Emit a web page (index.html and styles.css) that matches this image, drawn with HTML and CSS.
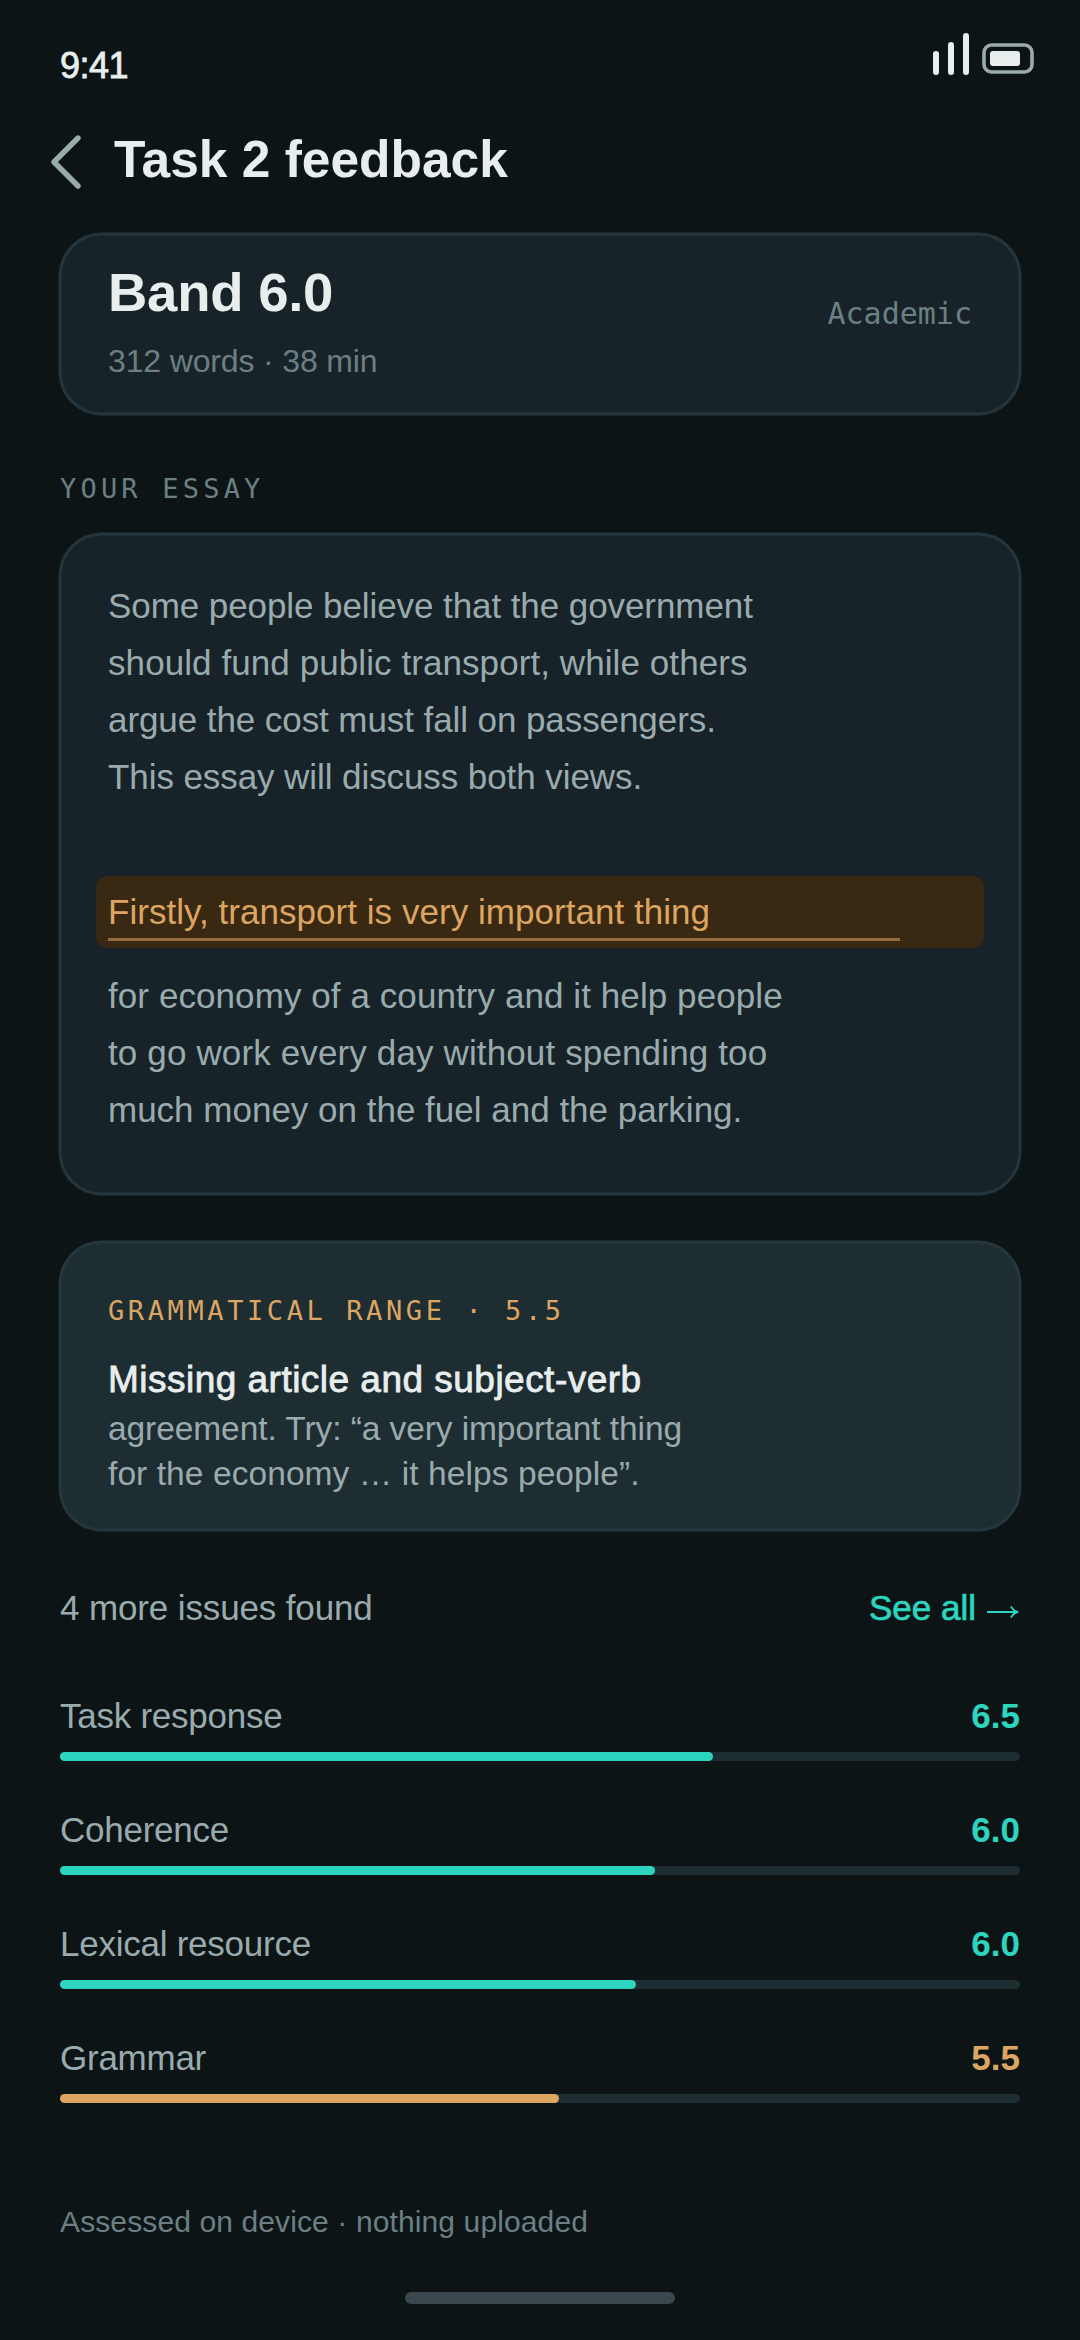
FILE: index.html
```html
<!DOCTYPE html>
<html lang="en">
<head>
  <meta charset="utf-8">
  <title>Task 2 feedback</title>
  <link rel="stylesheet" href="styles.css">
</head>
<body>
  <div class="status">
    <span class="time">9:41</span>
    <svg class="status-icons" viewBox="932 32 103 44" width="103" height="44" aria-hidden="true">
      <rect class="signal" x="933" y="51" width="6" height="24" rx="3"/>
      <rect class="signal" x="948" y="42" width="6" height="33" rx="3"/>
      <rect class="signal" x="963" y="33" width="6" height="42" rx="3"/>
      <rect class="battery" x="984" y="45" width="48" height="27" rx="7.5"/>
      <rect class="signal" x="990" y="51" width="30" height="15" rx="3"/>
    </svg>
  </div>

  <header class="header">
    <svg class="back" viewBox="0 0 30 60" width="30" height="60" aria-label="Back">
      <path d="M27 9 3 33l24 24"/>
    </svg>
    <h1 class="title">Task 2 feedback</h1>
  </header>

  <main class="content">
    <section class="card summary">
      <div>
        <div class="band">Band 6.0</div>
        <div class="meta">312 words · 38 min</div>
      </div>
      <span class="module">Academic</span>
    </section>

    <h2 class="section-label">YOUR ESSAY</h2>

    <section class="card essay">
      <p class="line tight">Some people believe that the government</p>
      <p class="line wide">should fund public transport, while others</p>
      <p class="line tight">argue the cost must fall on passengers.</p>
      <p class="line tight">This essay will discuss both views.</p>
      <p class="highlight">Firstly, transport is very important thing</p>
      <p class="line wide">for economy of a country and it help people</p>
      <p class="line wider">to go work every day without spending too</p>
      <p class="line">much money on the fuel and the parking.</p>
    </section>

    <section class="card issue">
      <div class="criterion">GRAMMATICAL RANGE · 5.5</div>
      <h3 class="issue-title">Missing article and subject-verb</h3>
      <p class="issue-text tight">agreement. Try: “a very important thing</p>
      <p class="issue-text wide">for the economy … it helps people”.</p>
    </section>

    <div class="more">
      <span class="more-count">4 more issues found</span>
      <a class="see-all">See all
        <svg viewBox="0 0 34 16" width="34" height="16" aria-hidden="true"><path d="M1 8h31M25 2.3c1.5 3 4 5 7.2 5.7-3.2.7-5.7 2.7-7.2 5.7"/></svg>
      </a>
    </div>

    <div class="scores">
      <div class="score">
        <div class="score-row"><span class="name">Task response</span><b class="value">6.5</b></div>
        <div class="track"><div class="fill" style="width:68%"></div></div>
      </div>
      <div class="score">
        <div class="score-row"><span class="name">Coherence</span><b class="value">6.0</b></div>
        <div class="track"><div class="fill" style="width:62%"></div></div>
      </div>
      <div class="score">
        <div class="score-row"><span class="name">Lexical resource</span><b class="value">6.0</b></div>
        <div class="track"><div class="fill" style="width:60%"></div></div>
      </div>
      <div class="score weak">
        <div class="score-row"><span class="name">Grammar</span><b class="value">5.5</b></div>
        <div class="track"><div class="fill" style="width:52%"></div></div>
      </div>
    </div>

    <p class="footnote">Assessed on device · nothing uploaded</p>
  </main>

  <div class="home-bar"></div>
</body>
</html>
```
FILE: styles.css
```css
:root {
  --bg: #0c1416;
  --card: #172328;
  --raised: #1e2d32;
  --line: #26383e;
  --text: #e8eeee;
  --muted: #9aabae;
  --faint: #6c7f83;
  --teal: #2dd4bf;
  --amber: #dda562;
  --amber-bg: #3a2912;
}

* { box-sizing: border-box; margin: 0; padding: 0; }

body {
  width: 1080px;
  height: 2340px;
  overflow: hidden;
  background: var(--bg);
  color: var(--text);
  font-family: "Liberation Sans", Arial, sans-serif;
  display: flex;
  flex-direction: column;
}

p, span, h1, h2, h3, .band, .meta, .criterion { white-space: nowrap; }

.tight { letter-spacing: -0.08px; }
.wide { letter-spacing: 0.08px; }
.wider { letter-spacing: 0.135px; }

/* Status bar */
.status {
  height: 129px;
  padding: 32px 45px 0 60px;
  display: flex;
  justify-content: space-between;
  align-items: flex-start;
}
.time {
  margin-top: 10px;
  font-size: 36px;
  line-height: 48px;
  letter-spacing: -0.5px;
  -webkit-text-stroke: 0.8px currentColor;
}
.signal { fill: var(--text); }
.battery { fill: none; stroke: var(--muted); stroke-width: 3.6; }

/* Header */
.header {
  height: 105px;
  padding-left: 51px;
  display: flex;
  align-items: flex-start;
  gap: 33px;
}
.back path {
  fill: none;
  stroke: var(--muted);
  stroke-width: 5.4;
  stroke-linecap: round;
  stroke-linejoin: round;
}
.title {
  font-size: 51.5px;
  line-height: 60px;
  letter-spacing: -0.02px;
}

.content { padding: 0 60px; }

.card {
  padding: 0 48px;
  border-radius: 42px;
  background: var(--card);
  box-shadow: 0 0 0 1.5px var(--line), inset 0 0 0 1.5px var(--line);
}

/* Summary */
.summary {
  height: 180px;
  padding-top: 29px;
  display: flex;
  justify-content: space-between;
  align-items: flex-start;
}
.band {
  font-size: 54.5px;
  font-weight: 700;
  line-height: 60px;
  letter-spacing: -0.25px;
}
.meta {
  margin-top: 17px;
  font-size: 32px;
  line-height: 42px;
  letter-spacing: -0.15px;
  color: var(--faint);
}
.module {
  margin-top: 33px;
  font: 30px/36px "DejaVu Sans Mono", monospace;
  color: var(--faint);
}

.section-label {
  margin: 57px 0 27px;
  font: 27px/36px "DejaVu Sans Mono", monospace;
  letter-spacing: 4.2px;
  color: var(--faint);
}

/* Essay */
.essay { height: 660px; padding-top: 43px; }
.line {
  font-size: 35px;
  line-height: 57px;
  color: var(--muted);
}
.highlight {
  position: relative;
  height: 72px;
  margin: 71px -12px 19px;
  padding-left: 12px;
  border-radius: 12px;
  background: var(--amber-bg);
  color: var(--amber);
  font-size: 35px;
  line-height: 71px;
  letter-spacing: 0.04px;
}
.highlight::after {
  content: "";
  position: absolute;
  left: 12px;
  top: 62px;
  width: 792px;
  height: 3px;
  background: var(--amber);
  opacity: 0.55;
}

/* Issue detail */
.issue {
  height: 288px;
  margin-top: 48px;
  padding-top: 51px;
  background: var(--raised);
}
.criterion {
  font: 27px/36px "DejaVu Sans Mono", monospace;
  letter-spacing: 3.6px;
  color: var(--amber);
}
.issue-title {
  margin: 27px 0 2px;
  font-size: 37px;
  font-weight: 400;
  line-height: 48px;
  letter-spacing: 0.48px;
  -webkit-text-stroke: 0.8px currentColor;
}
.issue-text {
  font-size: 33.5px;
  line-height: 45px;
  color: var(--muted);
}

/* More issues */
.more {
  margin: 54px 0 60px;
  display: flex;
  justify-content: space-between;
  font-size: 35px;
  line-height: 48px;
}
.more-count { color: var(--muted); letter-spacing: -0.13px; }
.see-all {
  display: flex;
  align-items: center;
  gap: 10px;
  color: var(--teal);
  -webkit-text-stroke: 0.7px currentColor;
}
.see-all svg { margin-top: 7px; }
.see-all path {
  fill: none;
  stroke: var(--teal);
  stroke-width: 1.8;
}

/* Score bars */
.scores { display: grid; gap: 45px; }
.score-row {
  display: flex;
  justify-content: space-between;
  font-size: 35px;
  line-height: 48px;
}
.name { color: var(--muted); letter-spacing: -0.25px; }
.value { color: var(--teal); }
.track {
  height: 9px;
  margin-top: 12px;
  border-radius: 4.5px;
  background: var(--raised);
}
.fill {
  height: 9px;
  border-radius: 4.5px;
  background: var(--teal);
}
.weak .value { color: var(--amber); }
.weak .fill { background: var(--amber); }

.footnote {
  margin-top: 101px;
  font-size: 30px;
  line-height: 36px;
  letter-spacing: 0.116px;
  color: var(--faint);
}

.home-bar {
  width: 270px;
  height: 12px;
  margin: 52px auto 0;
  border-radius: 6px;
  background: #3a484d;
}
```
